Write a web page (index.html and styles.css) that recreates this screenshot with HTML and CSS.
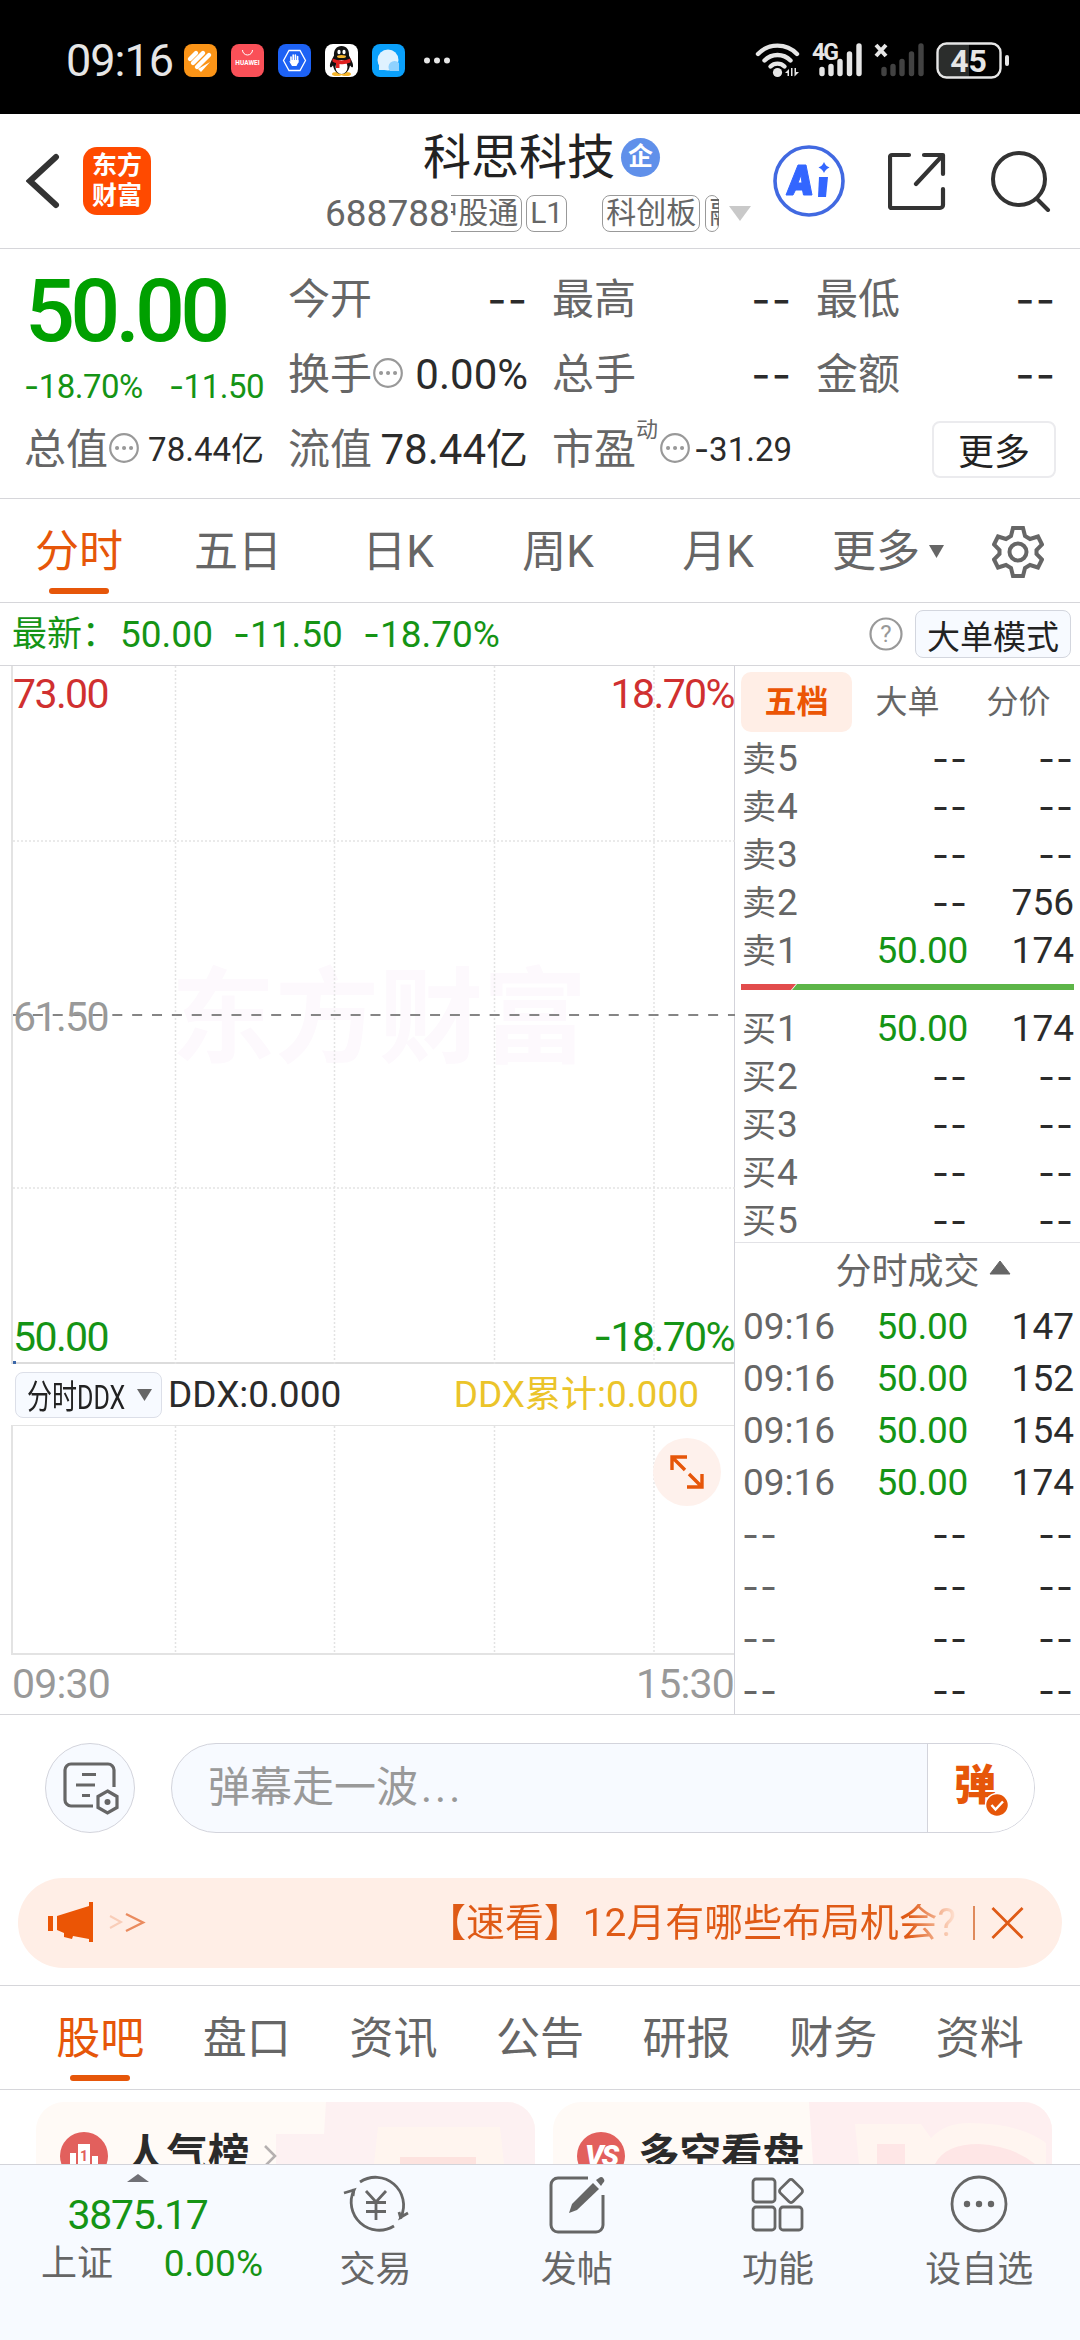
FILE: index.html
```html
<!DOCTYPE html>
<html lang="zh-CN">
<head>
  <meta charset="UTF-8">
  <meta name="viewport" content="width=device-width, initial-scale=1.0">
  <title>科思科技 688788</title>
  <link rel="stylesheet" href="styles.css">
</head>
<body>
  <!-- Статус -->
  <div class="status">
    <span class="status-time">09:16</span>
    <div class="status-apps">
      <svg width="33" height="33" viewBox="0 0 33 33"><rect width="33" height="33" rx="8" fill="#fb9417"/><path d="M6 15l6-6M9 19L19 9M13 23L25 11" stroke="#fff" stroke-width="4.400" stroke-linecap="round"/><path d="M14 25l3 3 9-10" fill="#fff"/></svg>
      <svg width="33" height="33" viewBox="0 0 33 33"><rect width="33" height="33" rx="8" fill="#fa5058"/><path d="M11.500 6a5 5 0 0 0 10 0" fill="none" stroke="#fff" stroke-width="1"/><text x="16.500" y="21" class="hw">HUAWEI</text></svg>
      <svg width="33" height="33" viewBox="0 0 33 33"><rect width="33" height="33" rx="8" fill="#1d62f5"/><path d="M11 6.500h11l5.500 10-5.500 10H11l-5.500-10z" fill="none" stroke="#fff" stroke-width="1.300"/><path d="M13 13v5M15.200 11v7M17.400 11v7M19.600 12.500v6" stroke="#fff" stroke-width="1.600" stroke-linecap="round"/><path d="M11 17l3 5h4.500l2-4v-2h-7.500v2z" fill="#fff"/></svg>
      <svg width="33" height="33" viewBox="0 0 33 33"><rect width="33" height="33" rx="8" fill="#fff"/><ellipse cx="12" cy="30" rx="5" ry="2" fill="#f5b52b"/><ellipse cx="21" cy="30" rx="5" ry="2" fill="#f5b52b"/><path d="M16.500 2c-5 0-8 4-7.500 9.500-2 4-4.500 8-4 11 .5 2 2 0 3-1 1 5 4 8.500 8.500 8.500s7.500-3.500 8.500-8.500c1 1 2.500 3 3 1 .5-3-2-7-4-11C24.500 6 21.500 2 16.500 2z" fill="#111"/><ellipse cx="16.500" cy="23" rx="6" ry="7" fill="#fff"/><ellipse cx="14" cy="8" rx="1.600" ry="2.300" fill="#fff"/><ellipse cx="19" cy="8" rx="1.600" ry="2.300" fill="#fff"/><ellipse cx="16.500" cy="12.500" rx="4.500" ry="1.500" fill="#f5b52b"/><path d="M7.500 14.500q9 4 18 0v4q-6 2.500-11 1.500v4h-3.500v-5q-2-.5-3.500-1.500z" fill="#e02020"/></svg>
      <svg width="33" height="33" viewBox="0 0 33 33"><rect width="33" height="33" rx="8" fill="#0aa0fb"/><circle cx="16" cy="16" r="10.500" fill="#dff2ff"/><path d="M7 20v6h6z" fill="#dff2ff"/><path d="M27 19v8h-9a6 6 0 1 1 9-8z" fill="#8fd2ff"/></svg>
      <svg width="32" height="33" viewBox="0 0 32 33"><circle cx="8" cy="16.500" r="3" fill="#e6e6e6"/><circle cx="18" cy="16.500" r="3" fill="#e6e6e6"/><circle cx="28" cy="16.500" r="3" fill="#e6e6e6"/></svg>
    </div>
    <svg class="status-right" width="256" height="40" viewBox="0 0 256 40">
      <g fill="none" stroke="#e6e6e6" stroke-width="4.400" stroke-linecap="round">
        <path d="M3 14a27 27 0 0 1 39 0"/><path d="M9.500 20.500a18 18 0 0 1 26 0"/><path d="M15.500 26.500a10 10 0 0 1 14 0"/>
      </g>
      <circle cx="22.500" cy="32.500" r="4.600" fill="#e6e6e6"/>
      <path d="M30 33l4-4v7h-1.500v-3zM44 32l-4.500 4.500V28H41v4zM36 28h1.500v8H36z" fill="#e6e6e6"/>
      <text x="57" y="20" class="net">4G</text>
      <g stroke="#e6e6e6" stroke-width="5.400" stroke-linecap="round"><path d="M67 29.500v4M76 26.500v7M85 21.500v12M94.500 14v19.500M104 6v27.500"/></g>
      <path d="M121 5l10 11M131 5l-10 11" stroke="#e6e6e6" stroke-width="4"/>
      <g stroke="#424242" stroke-width="5.400" stroke-linecap="round"><path d="M129 29.500v4M138 26.500v7M147 21.500v12M156.500 14v19.500M166 6v27.500"/></g>
      <path d="M190 4h24v33h-24a7 7 0 0 1-7-7V11a7 7 0 0 1 7-7z" fill="#2b2d2c"/>
      <rect x="182.500" y="3.500" width="63" height="34" rx="9" fill="none" stroke="#e6e6e6" stroke-width="2.400"/>
      <rect x="250" y="15" width="4" height="11" rx="2" fill="#e6e6e6"/>
      <text x="213.500" y="32" class="bat">45</text>
    </svg>
  </div>

  <!-- Шапка -->
  <header class="header">
    <svg class="back" width="34" height="56" viewBox="0 0 34 56"><path d="M30 4L4 28l26 24" fill="none" stroke="#333" stroke-width="6" stroke-linecap="round"/></svg>
    <div class="logo"><span>东方</span><span>财富</span></div>
    <div class="stock">
      <div class="stock-name">科思科技<span class="ent">企</span></div>
      <div class="stock-code">
        <span class="num">688788</span>
        <div class="tags">
          <div class="tag-clip"><span class="tag">沪股通</span></div>
          <span class="tag">L1</span>
          <span class="tag tag-board">科创板</span>
          <div class="tag-cut"><span class="tag">融</span></div>
        </div>
        <svg width="22" height="15" viewBox="0 0 22 15"><path d="M0 0h22L11 15z" fill="#c9c9c9"/></svg>
      </div>
    </div>
    <svg class="ai" width="72" height="72" viewBox="0 0 72 72"><circle cx="36" cy="36" r="34" fill="none" stroke="#4169e1" stroke-width="3.600"/><path d="M13 50L25 20h8l6 30h-8.500l-1-5h-7l-2.500 5zM25 38h4l-1-8z" fill="#3366ff" stroke="#3366ff" stroke-width="1"/><path d="M46 32h9l-2 20h-8z" fill="#3366ff"/><path d="M51 17q1.500 4 5.500 5.500-4 1.500-5.500 5.500-1.500-4-5.500-5.500 4-1.500 5.500-5.500z" fill="#3366ff"/></svg>
    <svg class="share" width="58" height="60" viewBox="0 0 58 60" fill="none" stroke="#333" stroke-width="4.200" stroke-linecap="round" stroke-linejoin="round"><path d="M21 4H4a2 2 0 0 0-2 2v49a2 2 0 0 0 2 2h48a3 3 0 0 0 3-3V38M36 4h19v19M54 5L28 33"/></svg>
    <svg width="60" height="62" viewBox="0 0 60 62" fill="none" stroke="#333" stroke-width="4" stroke-linecap="round"><circle cx="28" cy="29" r="26"/><path d="M46 49l11 11"/></svg>
  </header>

  <!-- Котировка -->
  <section class="quote">
    <div class="quote-price">
      <div class="price">50.00</div>
      <div class="change"><span><i>-</i>18.70%</span><span><i>-</i>11.50</span></div>
    </div>
    <div class="cell"><label>今开</label><span class="dash">--</span></div>
    <div class="cell"><label>最高</label><span class="dash">--</span></div>
    <div class="cell"><label>最低</label><span class="dash">--</span></div>
    <div class="cell"><label>换手</label><svg class="dots" viewBox="0 0 30 30"><circle cx="15" cy="15" r="13.800"/><path d="M8 15h.1M15 15h.1M22 15h.1"/></svg><span>0.00%</span></div>
    <div class="cell"><label>总手</label><span class="dash">--</span></div>
    <div class="cell"><label>金额</label><span class="dash">--</span></div>
    <div class="cell small"><label>总值</label><svg class="dots" viewBox="0 0 30 30"><circle cx="15" cy="15" r="13.800"/><path d="M8 15h.1M15 15h.1M22 15h.1"/></svg><span>78.44亿</span></div>
    <div class="cell"><label>流值</label><span>78.44亿</span></div>
    <div class="cell small"><label>市盈<sup>动</sup></label><svg class="dots" viewBox="0 0 30 30"><circle cx="15" cy="15" r="13.800"/><path d="M8 15h.1M15 15h.1M22 15h.1"/></svg><span><i>-</i>31.29</span></div>
    <div class="cell"><button class="more">更多</button></div>
  </section>

  <!-- Периоды -->
  <nav class="periods">
    <a class="active">分时</a>
    <a>五日</a>
    <a>日K</a>
    <a>周K</a>
    <a>月K</a>
    <a class="periods-more">更多<svg width="15" height="13" viewBox="0 0 15 13"><path d="M0 0h15L7.500 13z" fill="#666"/></svg></a>
    <svg class="gear" width="52" height="54" viewBox="0 0 52 54" fill="none" stroke="#666" stroke-width="4"><path d="M21 3h10l2 8 5 3 8-2.500 4 8-5.500 5.500v4l5.500 5.500-4 8-8-2.500-5 3-2 8H21l-2-8-5-3-8 2.500-4-8L7.500 29v-4L2 19.500l4-8 8 2.500 5-3z"/><circle cx="26" cy="27" r="8.500"/></svg>
  </nav>

  <div class="latest">
    <span class="latest-label">最新：</span>
    <span>50.00</span><span><i>-</i>11.50</span><span><i>-</i>18.70%</span>
    <svg class="help" width="34" height="34" viewBox="0 0 34 34"><circle cx="17" cy="17" r="15.500" fill="none" stroke="#999" stroke-width="2.200"/><text x="17" y="25">?</text></svg>
    <button class="big-order">大单模式</button>
  </div>

  <main class="trade">
    <!-- График -->
    <section class="charts">
      <div class="chart">
        <svg class="grid" width="722" height="698" viewBox="0 0 722 698">
          <text x="158" y="389" class="watermark">东方财富</text>
          <g stroke="#e3e3e3" stroke-width="1.500" stroke-dasharray="2 2"><path d="M162.500 0v698M321.500 0v698M481.500 0v698M641 0v698M0 175h722M0 522h722"/></g>
          <path d="M0 349h722" stroke="#858585" stroke-width="2" stroke-dasharray="10 9.860"/>
          <rect x="0" y="695" width="3" height="3" fill="#3b67a8"/>
        </svg>
        <div class="scale up"><span>73.00</span><span>18.70%</span></div>
        <div class="scale mid"><span>61.50</span></div>
        <div class="scale down"><span>50.00</span><span><i>-</i>18.70%</span></div>
      </div>
      <div class="ddx">
        <button class="ddx-button"><span>分时DDX</span><svg width="15" height="12" viewBox="0 0 15 12"><path d="M0 0h15L7.500 12z" fill="#666"/></svg></button>
        <span>DDX:0.000</span>
        <span class="ddx-sum">DDX<em>累计</em>:0.000</span>
      </div>
      <div class="chart-sub">
        <svg class="grid" width="722" height="228" viewBox="0 0 722 228"><g stroke="#e3e3e3" stroke-width="1.500" stroke-dasharray="2 2"><path d="M162.500 0v228M321.500 0v228M481.500 0v228M641 0v228"/></g></svg>
        <div class="expand"><svg width="36" height="36" viewBox="0 0 36 36" fill="none" stroke="#e65609" stroke-width="3.400"><path d="M3 16V3h15M4 4l12 12M33 20v13H18M32 32L20 20"/></svg></div>
      </div>
      <div class="times"><span>09:30</span><span>15:30</span></div>
    </section>

    <!-- Стакан -->
    <section class="book">
      <div class="book-tabs"><a class="active">五档</a><a>大单</a><a>分价</a></div>
      <div class="row"><label>卖<b>5</b></label><span class="dash">--</span><span class="dash">--</span></div>
      <div class="row"><label>卖<b>4</b></label><span class="dash">--</span><span class="dash">--</span></div>
      <div class="row"><label>卖<b>3</b></label><span class="dash">--</span><span class="dash">--</span></div>
      <div class="row"><label>卖<b>2</b></label><span class="dash">--</span><span>756</span></div>
      <div class="row"><label>卖<b>1</b></label><span class="green">50.00</span><span>174</span></div>
      <svg class="ratio" width="333" height="6" viewBox="0 0 333 6"><path d="M0 0h55l-5 6H0z" fill="#e24c4c"/><path d="M56 0h277v6H51z" fill="#5db548"/></svg>
      <div class="row"><label>买<b>1</b></label><span class="green">50.00</span><span>174</span></div>
      <div class="row"><label>买<b>2</b></label><span class="dash">--</span><span class="dash">--</span></div>
      <div class="row"><label>买<b>3</b></label><span class="dash">--</span><span class="dash">--</span></div>
      <div class="row"><label>买<b>4</b></label><span class="dash">--</span><span class="dash">--</span></div>
      <div class="row"><label>买<b>5</b></label><span class="dash">--</span><span class="dash">--</span></div>
      <div class="deals-title">分时成交<svg width="22" height="15" viewBox="0 0 22 15"><path d="M11 1L21 14H1z" fill="#666" stroke="#666" stroke-linejoin="round"/></svg></div>
      <div class="row deal"><label><b>09:16</b></label><span class="green">50.00</span><span>147</span></div>
      <div class="row deal"><label><b>09:16</b></label><span class="green">50.00</span><span>152</span></div>
      <div class="row deal"><label><b>09:16</b></label><span class="green">50.00</span><span>154</span></div>
      <div class="row deal"><label><b>09:16</b></label><span class="green">50.00</span><span>174</span></div>
      <div class="row deal"><label class="dash">--</label><span class="dash">--</span><span class="dash">--</span></div>
      <div class="row deal"><label class="dash">--</label><span class="dash">--</span><span class="dash">--</span></div>
      <div class="row deal"><label class="dash">--</label><span class="dash">--</span><span class="dash">--</span></div>
      <div class="row deal"><label class="dash">--</label><span class="dash">--</span><span class="dash">--</span></div>
    </section>
  </main>

  <!-- Комментарии -->
  <div class="danmu">
    <div class="danmu-set"><svg width="56" height="54" viewBox="0 0 56 54" fill="none" stroke="#666" stroke-width="3.200"><path d="M30 44H8a6 6 0 0 1-6-6V8a6 6 0 0 1 6-6h37a6 6 0 0 1 6 6v17M19 12.500h14M13 23h19M19 33.500h8" stroke-linecap="butt"/><path d="M44.500 29l9.500 5.500v11L44.500 51 35 45.500v-11z"/><circle cx="44.500" cy="40" r="3" fill="#666" stroke="none"/></svg></div>
    <div class="danmu-input">
      <div class="danmu-hint">弹幕走一波<span>...</span></div>
      <div class="danmu-send">弹<svg width="24" height="24" viewBox="0 0 24 24"><circle cx="12" cy="12" r="11.500" fill="#e65609" stroke="#fff" stroke-width="1.500"/><path d="M6.500 12l4 4.500 7.500-8" fill="none" stroke="#fff" stroke-width="2.500"/></svg></div>
    </div>
  </div>

  <div class="notice">
    <svg width="98" height="42" viewBox="0 0 98 42"><path d="M0 14h5v15H0zM9 14L41 4V0h4v40h-4v-3l-16-3-1 3-8-2v-4l-7-3z" fill="#eb5505"/><path d="M62 14l11 6-11 6" fill="none" stroke="#f9cdb8" stroke-width="2"/><path d="M78 12l17 8.500L78 29" fill="none" stroke="#ea8b5f" stroke-width="2.400"/></svg>
    <div class="notice-text">【速看】12月有哪些布局机会?</div>
    <svg class="close" width="34" height="34" viewBox="0 0 34 34"><path d="M1.500 1.500l31 31M32.500 1.500l-31 31" stroke="#df5a16" stroke-width="2.800"/></svg>
  </div>

  <nav class="sections">
    <a class="active">股吧</a><a>盘口</a><a>资讯</a><a>公告</a><a>研报</a><a>财务</a><a>资料</a>
  </nav>

  <div class="cards">
    <div class="card">
      <svg class="card-art" width="499" height="62" viewBox="0 0 499 62"><path d="M290 0h209v62H240V32h48z" fill="#fdf1f2"/><path d="M342 25h122l4 37H338z" fill="#fff5ef"/><path d="M364 55h76v7h-76z" fill="#fde3df"/></svg>
      <svg width="48" height="48" viewBox="0 0 48 48"><circle cx="24" cy="24" r="24" fill="#e2605d"/><path d="M10 21h6v27h-6zM18 12h12v36H18zM32 24h6v24h-6z" fill="#fff"/><text x="24" y="29" class="rank">1</text></svg>
      <span>人气榜</span>
      <svg width="14" height="24" viewBox="0 0 14 24"><path d="M2 2l10 10L2 22" fill="none" stroke="#b5b0b0" stroke-width="2.600"/></svg>
    </div>
    <div class="card">
      <svg class="card-art" width="499" height="62" viewBox="0 0 499 62"><path d="M256 0h243v62H260z" fill="#feeff0"/><path d="M302 22h66l10 14q14-15 38-15 50 0 77 20v21H306z" fill="#fff5f0"/><path d="M324 42h28v20h-28zM382 62q10-20 44-20 34 2 56 20z" fill="#fee6e6"/></svg>
      <svg width="48" height="48" viewBox="0 0 48 48"><circle cx="24" cy="24" r="24" fill="#e2605d"/><text x="24" y="34" class="vs">VS</text></svg>
      <span>多空看盘</span>
    </div>
  </div>

  <footer class="bottom">
    <div class="index">
      <svg width="22" height="8" viewBox="0 0 22 8"><path d="M11 0l11 8H0z" fill="#707076"/></svg>
      <div class="index-value">3875.17</div>
      <div class="index-row"><span>上证</span><b>0.00%</b></div>
    </div>
    <div class="tool"><svg width="66" height="60" viewBox="0 0 66 60" fill="none" stroke="#666" stroke-width="2.800"><path d="M17 8A28 28 0 0 1 58 43l7-4M51 52A28 28 0 0 1 11 16l-10 3"/><path d="M58 45l-2-7M11 15l-1 7M23 17l10 11 10-11M33 28v18M23 28.500h20M23 37.500h20"/></svg>交易</div>
    <div class="tool"><svg width="58" height="60" viewBox="0 0 58 60" fill="none" stroke="#666" stroke-width="3"><path d="M40 4H10a7 7 0 0 0-7 7v40a7 7 0 0 0 7 7h38a7 7 0 0 0 7-7V21"/><path d="M21 39l3-9L45 9l6 6-22 21z" fill="#666" stroke="none"/><path d="M48 6l3-2a3 3 0 0 1 4 5l-2 3z" fill="#666" stroke="none"/></svg>发帖</div>
    <div class="tool"><svg width="54" height="60" viewBox="0 0 54 60" fill="none" stroke="#666" stroke-width="2.800"><rect x="2" y="5" width="22" height="23" rx="3"/><rect x="2" y="33" width="22" height="23" rx="3"/><rect x="29" y="33" width="22" height="23" rx="3"/><rect x="31" y="8" width="18" height="18" rx="3" transform="rotate(45 40 17)"/></svg>功能</div>
    <div class="tool"><svg width="58" height="60" viewBox="0 0 58 60"><circle cx="29" cy="30" r="27" fill="none" stroke="#666" stroke-width="2.800"/><g fill="#666"><circle cx="17" cy="30" r="3.200"/><circle cx="29" cy="30" r="3.200"/><circle cx="41" cy="30" r="3.200"/></g></svg>设自选</div>
  </footer>
</body>
</html>
```

FILE: styles.css
```css
* {
  box-sizing: border-box;
}
body {
  margin: 0;
  width: 1080px;
  height: 2340px;
  display: flex;
  flex-direction: column;
  overflow: hidden;
  background-color: #fff;
  color: #2b2b2b;
  font-family: Roboto, "Noto Sans CJK SC", sans-serif;
  font-size: 37px;
  line-height: 1;
}
button {
  margin: 0;
  padding: 0;
  font-family: inherit;
  color: #222;
}
svg {
  flex: none;
}
i {
  font-family: Inter, sans-serif;
  font-style: normal;
}
.dash {
  font-family: Inter, sans-serif;
  letter-spacing: 1px;
}
.green {
  color: #159415;
}

/* status */
.status {
  height: 114px;
  flex: none;
  display: flex;
  align-items: center;
  padding: 6px 69px 0 66px;
  background-color: #000;
  color: #e6e6e6;
}
.status-time {
  width: 118px;
  font-size: 45px;
  letter-spacing: -1px;
}
.status-apps {
  display: flex;
  gap: 14px;
}
.status-right {
  margin-left: auto;
}
.hw {
  font-size: 6.5px;
  font-weight: 700;
  fill: #fff;
  text-anchor: middle;
}
.net {
  font-size: 23px;
  font-weight: 700;
  fill: #e6e6e6;
  letter-spacing: -2px;
}
.bat {
  font-size: 32px;
  font-weight: 700;
  fill: #e6e6e6;
  text-anchor: middle;
}

/* header */
.header {
  height: 135px;
  flex: none;
  display: flex;
  align-items: center;
  padding: 0 29px 0 26px;
  border-bottom: 1px solid #d6d6da;
}
.logo {
  width: 68px;
  height: 68px;
  margin-left: 23px;
  padding-top: 4px;
  border-radius: 14px;
  background-color: #ff4a00;
  color: #fff;
  display: flex;
  flex-direction: column;
  align-items: center;
  font-size: 25px;
  font-weight: 700;
  line-height: 30px;
}
.stock {
  width: 428px;
  margin-left: 174px;
}
.stock-name {
  height: 60px;
  padding: 5px 0 0 98px;
  display: flex;
  align-items: center;
  font-size: 48px;
  color: #222;
}
.ent {
  width: 39px;
  height: 39px;
  margin-left: 6px;
  border-radius: 50%;
  background-color: #6090ea;
  color: #fff;
  font-size: 25px;
  font-weight: 700;
  line-height: 38px;
  text-align: center;
}
.stock-code {
  height: 48px;
  margin-top: 4px;
  display: flex;
  align-items: center;
  color: #666;
}
.stock-code .num {
  width: 126px;
}
.tags {
  width: 268px;
  margin-right: 10px;
  display: flex;
}
.tag {
  height: 37px;
  padding: 0 3px;
  display: block;
  flex: none;
  border: 1.5px solid #999;
  border-radius: 8px;
  font-size: 30px;
  line-height: 33px;
  white-space: nowrap;
}
.tag-clip {
  width: 72px;
  margin-right: 4px;
  overflow: hidden;
  display: flex;
  justify-content: flex-end;
}
.tag-board {
  margin-left: 35px;
}
.tag-cut {
  width: 14px;
  margin-left: 5px;
  overflow: hidden;
}
.ai {
  margin-left: 20px;
}
.share {
  margin-left: 43px;
  margin-right: 45px;
}

/* quote */
.quote {
  height: 250px;
  flex: none;
  display: grid;
  grid-template-columns: repeat(4, 240px);
  grid-template-rows: repeat(3, 75px);
  column-gap: 24px;
  padding: 13px 24px 0;
  border-bottom: 1px solid #d6d6da;
}
.quote-price {
  grid-row: span 2;
  color: #00a000;
}
.price {
  height: 98px;
  padding-left: 1px;
  font-size: 88px;
  font-weight: 500;
  line-height: 98px;
  letter-spacing: -4.8px;
}
.change {
  height: 52px;
  display: flex;
  justify-content: space-between;
  align-items: center;
  font-size: 33px;
  letter-spacing: -0.5px;
  color: #159415;
}
.cell {
  display: flex;
  align-items: center;
  font-size: 42px;
}
.cell label {
  color: #666;
  position: relative;
}
.cell span {
  margin-left: auto;
}
.cell.small span {
  font-size: 33px;
}
.cell sup {
  position: absolute;
  left: 84px;
  top: -10px;
  font-size: 22px;
  line-height: 22px;
}
.dots {
  width: 30px;
  height: 30px;
  margin: -4px 0 0 1px;
  fill: none;
  stroke: #999;
  stroke-width: 2.2;
}
.dots path {
  stroke-width: 4;
  stroke-linecap: round;
}
.small label:has(sup) + .dots {
  margin-left: 24px;
}
.more {
  width: 124px;
  height: 57px;
  margin-left: auto;
  padding-bottom: 6px;
  border: 2px solid #ebebee;
  border-radius: 8px;
  background-color: #fff;
  font-size: 36px;
}

/* periods */
.periods {
  height: 104px;
  flex: none;
  display: flex;
  align-items: center;
  padding-top: 2px;
  border-bottom: 1px solid #d6d6da;
  font-size: 44px;
  color: #666;
}
.periods a {
  width: 160px;
  height: 100%;
  position: relative;
  display: flex;
  align-items: center;
  justify-content: center;
}
.periods a:first-child {
  width: 158px;
}
.periods a.periods-more {
  width: 180px;
  gap: 9px;
}
.active {
  color: #e65609;
}
.periods .active::after,
.sections .active::after {
  content: "";
  position: absolute;
  left: 50%;
  bottom: 8px;
  width: 60px;
  height: 6px;
  margin-left: -30px;
  border-radius: 3px;
  background-color: #e65609;
}
.gear {
  margin-left: 14px;
}

/* latest */
.latest {
  height: 63px;
  flex: none;
  display: flex;
  align-items: center;
  gap: 20px;
  padding: 0 9px 0 12px;
  border-bottom: 1px solid #d6d6da;
  color: #159415;
}
.latest-label {
  width: 88px;
  font-size: 35px;
  white-space: nowrap;
}
.help {
  margin-left: auto;
  margin-right: -8px;
}
.help text {
  font-size: 24px;
  fill: #999;
  text-anchor: middle;
}
.big-order {
  width: 156px;
  height: 48px;
  padding-bottom: 4px;
  border: 1px solid #d3d6de;
  border-radius: 8px;
  background-color: #f7faff;
  font-size: 33px;
}

/* trade */
.trade {
  height: 1049px;
  flex: none;
  display: flex;
  overflow: hidden;
  border-bottom: 1px solid #d6d6da;
}
.charts {
  width: 735px;
  padding-left: 11px;
  border-right: 1px solid #d3d3da;
}
.chart {
  height: 698px;
  position: relative;
  display: flex;
  flex-direction: column;
  justify-content: space-between;
  border-left: 2px solid #e3e3e3;
  border-bottom: 2px solid #dcdcdc;
}
.grid {
  position: absolute;
  left: 0;
  top: 0;
}
.watermark {
  font-size: 104px;
  font-weight: 700;
  fill: #fdf9fd;
}
.scale {
  height: 56px;
  position: relative;
  display: flex;
  justify-content: space-between;
  align-items: center;
  font-size: 41px;
  letter-spacing: -1.6px;
}
.up {
  color: #d03030;
}
.mid {
  color: #999;
}
.down {
  height: 50px;
  color: #159415;
}
.ddx {
  height: 61px;
  display: flex;
  align-items: center;
  padding-left: 4px;
}
.ddx-button {
  width: 147px;
  height: 46px;
  margin-right: 6px;
  padding: 0 9px 0 11px;
  display: flex;
  align-items: center;
  justify-content: space-between;
  border: 1px solid #dcdfe8;
  border-radius: 8px;
  background-color: #f7faff;
  font-size: 34px;
}
.ddx-button span {
  width: 100px;
  transform: scaleX(0.735);
  transform-origin: left;
  white-space: nowrap;
}
.ddx-sum {
  margin: 0 35px 0 auto;
  color: #ebc42a;
}
.ddx-sum em {
  font-size: 36px;
  font-style: normal;
}
.chart-sub {
  height: 230px;
  position: relative;
  display: flex;
  justify-content: flex-end;
  padding: 12px 13px 0;
  border: 2px solid #e3e3e3;
  border-top-width: 1px;
  border-right: none;
}
.expand {
  width: 68px;
  height: 68px;
  position: relative;
  display: flex;
  align-items: center;
  justify-content: center;
  border-radius: 50%;
  background-color: #fef1ec;
}
.times {
  height: 59px;
  display: flex;
  justify-content: space-between;
  align-items: center;
  padding-left: 1px;
  font-size: 41px;
  letter-spacing: -0.8px;
  color: #999;
}

/* book */
.book {
  width: 345px;
  padding: 6px 6px 0;
}
.book-tabs {
  height: 60px;
  margin-bottom: 2px;
  display: flex;
  font-size: 32px;
  line-height: 61px;
  text-align: center;
  color: #666;
}
.book-tabs a {
  width: 111px;
}
.book-tabs .active {
  border-radius: 10px;
  background-color: #ffeee6;
  color: #eb5505;
  font-weight: 700;
}
.row {
  height: 48px;
  display: flex;
  align-items: center;
}
.row label {
  width: 100px;
  padding-left: 1px;
  font-size: 34px;
  color: #666;
}
.row label b {
  margin-left: 1px;
  font-size: 37px;
  font-weight: 400;
}
.row label.dash {
  font-size: 37px;
}
.row span {
  width: 127px;
  text-align: right;
}
.row span:last-child {
  width: 106px;
}
.row .green {
  letter-spacing: -0.3px;
}
.ratio {
  display: block;
  margin: 10px 0 14px;
}
.deals-title {
  height: 58px;
  margin: -2px -6px 0;
  padding-left: 31px;
  display: flex;
  justify-content: center;
  align-items: center;
  gap: 9px;
  border-top: 1px solid #e2e2e6;
  font-size: 36px;
  color: #666;
}
.deals-title svg {
  margin-top: -8px;
}
.deal {
  height: 52px;
}

/* danmu */
.danmu {
  height: 163px;
  flex: none;
  display: flex;
  padding: 28px 45px 0;
  gap: 36px;
}
.danmu-set {
  width: 90px;
  height: 90px;
  display: flex;
  align-items: center;
  justify-content: center;
  padding: 2px 0 0 2px;
  border: 1px solid #d3d4dc;
  border-radius: 50%;
  background-color: #f7faff;
}
.danmu-input {
  width: 864px;
  height: 90px;
  overflow: hidden;
  display: flex;
  align-items: center;
  justify-content: space-between;
  padding-left: 36px;
  border: 1px solid #d3d4dc;
  border-radius: 45px;
  background-color: #f7faff;
  color: #999;
  font-size: 42px;
}
.danmu-hint span {
  letter-spacing: 3px;
  margin-left: 3px;
}
.danmu-send {
  width: 107px;
  height: 100%;
  position: relative;
  padding-left: 26px;
  border-left: 1px solid #d3d4dc;
  background-color: #fff;
  color: #e65609;
  font-weight: 900;
  line-height: 84px;
}
.danmu-send svg {
  position: absolute;
  left: 57px;
  top: 49px;
}

/* notice */
.notice {
  height: 90px;
  flex: none;
  display: flex;
  align-items: center;
  margin: 0 18px 17px;
  padding: 0 38px 0 30px;
  border-radius: 45px;
  background-color: #ffeee6;
}
.notice-text {
  margin-left: auto;
  font-size: 38.9px;
  white-space: nowrap;
  background: linear-gradient(to right, #df5a16 91%, #ffe4d6);
  -webkit-background-clip: text;
  background-clip: text;
  color: transparent;
}
.close {
  width: 51px;
  padding-left: 16px;
  margin-left: 17px;
  border-left: 2px solid #df8a5c;
}

/* sections */
.sections {
  height: 105px;
  flex: none;
  display: flex;
  padding: 2px 27px 0;
  border-top: 1px solid #d6d6da;
  border-bottom: 1px solid #d6d6da;
  font-size: 44px;
  color: #666;
}
.sections a {
  flex: 1;
  position: relative;
  display: flex;
  align-items: center;
  justify-content: center;
}

/* cards */
.cards {
  height: 74px;
  flex: none;
  display: flex;
  gap: 18px;
  padding: 12px 28px 0 36px;
  overflow: hidden;
}
.card {
  width: 499px;
  height: 120px;
  flex: none;
  position: relative;
  overflow: hidden;
  display: flex;
  align-items: flex-start;
  padding: 30px 0 0 24px;
  border-radius: 28px;
  background-color: #fffaf6;
  font-size: 41.5px;
  font-weight: 700;
}
.card-art {
  position: absolute;
  left: 0;
  top: 0;
}
.card > svg,
.card > span {
  z-index: 1;
}
.card > .card-art {
  z-index: 0;
}
.card span {
  margin: 2px 13px 0 17px;
}
.card span + svg {
  margin-top: 12px;
}
.card:last-child span {
  margin-left: 13px;
}
.rank {
  font-size: 14px;
  fill: #e2605d;
  text-anchor: middle;
}
.vs {
  font-size: 29px;
  font-style: italic;
  font-weight: 900;
  fill: #fff;
  text-anchor: middle;
  letter-spacing: -2px;
}

/* bottom */
.bottom {
  height: 177px;
  flex: none;
  display: flex;
  border-top: 1px solid #d3d4da;
  background-color: #f7faff;
  color: #666;
}
.index {
  width: 275px;
  padding-top: 9px;
  display: flex;
  flex-direction: column;
  align-items: center;
  color: #159415;
}
.index-value {
  margin-top: 13px;
  font-size: 41px;
  letter-spacing: -1.3px;
}
.index-row {
  width: 275px;
  margin-top: 9px;
  padding: 0 12px 0 41px;
  display: flex;
  justify-content: space-between;
  align-items: center;
}
.index-row span {
  color: #666;
  font-size: 36px;
}
.index-row b {
  font-weight: 400;
}
.tool {
  width: 201.4px;
  padding-top: 9px;
  display: flex;
  flex-direction: column;
  align-items: center;
  gap: 18px;
  font-size: 36px;
}
```
